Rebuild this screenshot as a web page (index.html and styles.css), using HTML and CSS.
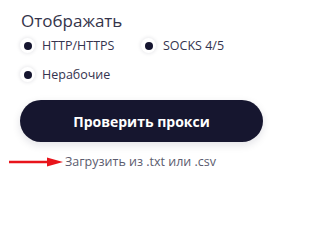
FILE: index.html
```html
<!DOCTYPE html>
<html lang="ru">
<head>
<meta charset="utf-8">
<link rel="stylesheet" href="styles.css">
</head>
<body>
<div class="panel">
  <h2 class="title">Отображать</h2>
  <div class="options">
    <label class="opt"><span class="radio"><span class="dot"></span></span>HTTP/HTTPS</label>
    <label class="opt"><span class="radio"><span class="dot"></span></span>SOCKS 4/5</label>
    <label class="opt"><span class="radio"><span class="dot"></span></span>Нерабочие</label>
  </div>
  <button class="check">Проверить прокси</button>
  <div class="upload">
    <svg class="arrow" width="54" height="10" viewBox="0 0 54 10"><line x1="0" y1="5" x2="40" y2="5" stroke="#e8141b" stroke-width="2.4"/><polygon points="38,0.5 54,5 38,9.5" fill="#e8141b"/></svg>
    <span class="upload-text">Загрузить из .txt или .csv</span>
  </div>
</div>
</body>
</html>
```
FILE: styles.css
```css
html, body { margin: 0; padding: 0; background: #fff; }
body { font-family: "Open Sans", "Noto Sans", sans-serif; width: 282px; height: 205px; overflow: hidden; }
.panel { padding: 9px 0 0 20px; }
.title { margin: 0 0 0 1px; font-size: 17px; font-weight: 400; color: #34344a; line-height: 23px; }
.options { display: grid; grid-template-columns: 121px auto; row-gap: 14px; margin-top: 6px; }
.opt { display: flex; align-items: center; height: 15px; font-size: 12.5px; color: #34344f; }
.radio { width: 15px; height: 15px; border-radius: 50%; background: #fff; box-shadow: 0 0 4px rgba(20,20,50,0.14); display: flex; align-items: center; justify-content: center; margin-right: 7px; }
.dot { width: 8px; height: 8px; border-radius: 50%; background: #15152f; }
.check { display: block; margin-top: 18px; width: 243px; height: 42px; border: none; border-radius: 21px; background: #16162f; color: #fff; font-family: "Open Sans", sans-serif; font-weight: 700; font-size: 14px; box-shadow: 0 3px 8px rgba(20,20,50,0.12); }
.upload { display: flex; align-items: center; margin-left: -11px; margin-top: 11px; }
.arrow { display: block; margin-right: 2px; }
.upload-text { font-size: 12.5px; color: #5b5b6e; }
```
